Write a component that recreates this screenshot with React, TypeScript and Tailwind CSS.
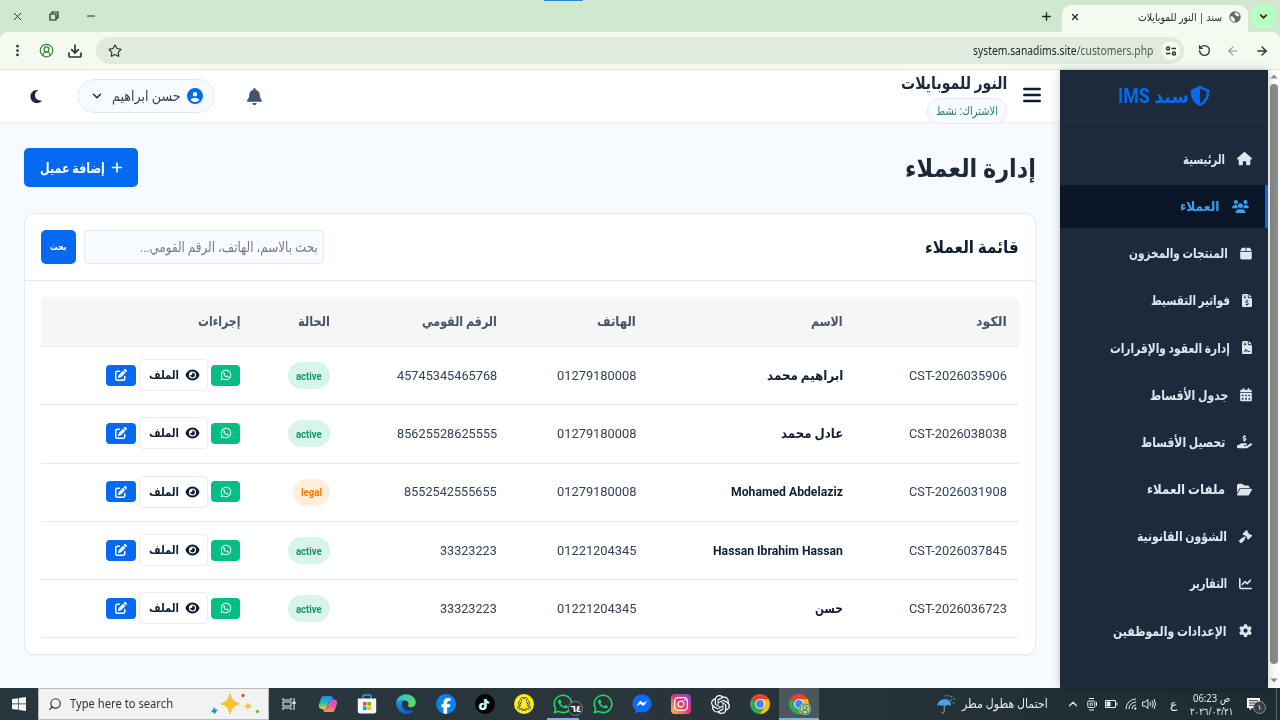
import React, { useLayoutEffect, useRef, useState } from 'react';
import clsx from 'clsx';
import {
  FaBell, FaBox, FaCalendarDays, FaChartLine, FaCircleUser, FaEye, FaFacebookF, FaFileContract,
  FaFileInvoiceDollar, FaFolderOpen, FaGavel, FaGear, FaHandHoldingDollar, FaHouse, FaInstagram,
  FaMoon, FaPenToSquare, FaPlus, FaShieldHalved, FaSnapchat, FaTiktok, FaUsers, FaWhatsapp,
} from 'react-icons/fa6';
import { SiOpenai } from 'react-icons/si';
import { ArrowLeft, ArrowRight, ChevronDown, ChevronUp, CircleUserRound, Download, EllipsisVertical, Minus, Plus, RotateCcw, Search, Star, X } from 'lucide-react';

// Squeezes or stretches one line of text to the width given by its class
function Fit({ children, className }: { children: React.ReactNode; className?: string }) {
  const outer = useRef<HTMLSpanElement>(null);
  const inner = useRef<HTMLSpanElement>(null);
  const [scale, setScale] = useState(1);
  useLayoutEffect(() => {
    if (outer.current && inner.current) setScale(outer.current.clientWidth / inner.current.offsetWidth);
  }, [children]);
  return (
    <span ref={outer} dir="ltr" className={clsx('block shrink-0 text-left leading-none', className)}>
      <span ref={inner} dir="auto" className="inline-block whitespace-nowrap origin-left" style={{ transform: `scaleX(${scale})` }}>
        {children}
      </span>
    </span>
  );
}

const MENU = [
  { icon: FaHouse, iconW: 'w-[15px]', label: 'الرئيسية', w: 'w-[42px]' },
  { icon: FaUsers, iconW: 'w-[17px]', label: 'العملاء', w: 'w-[40px]', active: true },
  { icon: FaBox, iconW: 'w-[12px]', label: 'المنتجات والمخزون', w: 'w-[99px]' },
  { icon: FaFileInvoiceDollar, iconW: 'w-[10px]', label: 'فواتير التقسيط', w: 'w-[79px]' },
  { icon: FaFileContract, iconW: 'w-[10px]', label: 'إدارة العقود والإقرارات', w: 'w-[120px]' },
  { icon: FaCalendarDays, iconW: 'w-[12px]', label: 'جدول الأقساط', w: 'w-[78px]' },
  { icon: FaHandHoldingDollar, iconW: 'w-[15px]', label: 'تحصيل الأقساط', w: 'w-[84px]' },
  { icon: FaFolderOpen, iconW: 'w-[15px]', label: 'ملفات العملاء', w: 'w-[78px]' },
  { icon: FaGavel, iconW: 'w-[13px]', label: 'الشؤون القانونية', w: 'w-[90px]' },
  { icon: FaChartLine, iconW: 'w-[13px]', label: 'التقارير', w: 'w-[37px]' },
  { icon: FaGear, iconW: 'w-[13px]', label: 'الإعدادات والموظفين', w: 'w-[114px]' },
];

const COLUMNS = [
  { label: 'الكود', w: 'w-[31px]' },
  { label: 'الاسم', w: 'w-[32px]' },
  { label: 'الهاتف', w: 'w-[39px]' },
  { label: 'الرقم القومي', w: 'w-[75px]' },
  { label: 'الحالة', w: 'w-[32px]' },
  { label: 'إجراءات', w: 'w-[42px]' },
];

const CUSTOMERS = [
  { code: 'CST-2026035906', name: 'ابراهيم محمد', nameW: 'w-[76px]', phone: '01279180008', nid: '45745345465768', nidW: 'w-[100px]', status: 'active' },
  { code: 'CST-2026038038', name: 'عادل محمد', nameW: 'w-[62px]', phone: '01279180008', nid: '85625528625555', nidW: 'w-[100px]', status: 'active' },
  { code: 'CST-2026031908', name: 'Mohamed Abdelaziz', nameW: 'w-[112px]', phone: '01279180008', nid: '8552542555655', nidW: 'w-[93px]', status: 'legal' },
  { code: 'CST-2026037845', name: 'Hassan Ibrahim Hassan', nameW: 'w-[130px]', phone: '01221204345', nid: '33323223', nidW: 'w-[57px]', status: 'active' },
  { code: 'CST-2026036723', name: 'حسن', nameW: 'w-[28px]', phone: '01221204345', nid: '33323223', nidW: 'w-[57px]', status: 'active' },
];

const GRID = 'grid grid-cols-[164px_207px_139px_167px_90px_211px]';

function Globe() {
  return (
    <svg viewBox="0 0 12 12" className="size-3">
      <circle cx="6" cy="6" r="5.7" fill="#5f6763" />
      <path d="M1.4 5.3c1.6 0 3 .2 3.3 1.4.2 1 1.5.8 1.4 2L5.4 11C3 10.6 1.3 8.600 1.4 5.3zM6 1.5c1.8-.3 3.8 1.2 4.4 3.3l-1.5.7-1.6-.6-.6-1.4-1.6.2z" fill="#f4faf0" />
    </svg>
  );
}

function Browser() {
  return (
    <header className="font-['Noto_Sans','DejaVu_Sans',sans-serif]">
      <div className="relative flex h-8 items-center bg-[#d0e8d0] text-[#1c2b1f]">
        <div className="absolute left-[544px] top-0 flex h-px w-[192px] bg-[#dfe6df]"><div className="w-[39px] bg-[#2a8ad4]" /></div>
        <X className="ml-[11px] size-[13px]" strokeWidth={1.7} />
        <svg viewBox="0 0 10 10" className="ml-[25px] size-[10px]" fill="none" stroke="currentColor" strokeWidth="1.2"><path d="M1 3h6v6H1zM3 3V1h6v6H7" /></svg>
        <Minus className="ml-[26px] size-[12px]" strokeWidth={2.2} />
        <Plus className="ml-auto size-[13px]" strokeWidth={2.5} />
        <div className="ml-[9px] flex h-[27px] w-[186px] items-center self-end rounded-t-[9px] bg-[#f4faf0] pb-1 pl-[8px] pr-[7px]">
          <X className="size-[10px]" strokeWidth={3} />
          <Fit className="ml-auto w-[84px] text-[11px]">سند | النور للموبايلات</Fit>
          <span className="ml-[7px]"><Globe /></span>
        </div>
        <div className="ml-1 mr-[5px] flex size-[23px] items-center justify-center rounded-[8px] bg-[#b8ffc4]">
          <ChevronDown className="size-[11px]" strokeWidth={3.5} />
        </div>
      </div>
      <div className="bg-[#d0e8d0]">
        <div className="flex h-[38px] items-center rounded-t-[8px] border-b border-[#e2e7e0] bg-[#f4faf0] text-[#26382a]">
          <EllipsisVertical className="ml-[10px] size-[15px]" strokeWidth={2.4} />
          <CircleUserRound className="ml-[14px] size-[15px] text-[#2d8a3c]" strokeWidth={2} />
          <Download className="ml-[13px] size-[16px]" strokeWidth={2.5} />
          <div className="ml-[13px] flex h-[27px] w-[1088px] items-center rounded-full bg-[#e0eadf] pl-[12px] pr-[4px]">
            <Star className="size-[14px]" strokeWidth={2} />
            <Fit className="ml-auto w-[180px] text-[12px]"><span className="text-[#1a271d]">system.sanadims.site</span><span className="text-[#506052]">/customers.php</span></Fit>
            <span className="ml-[8px] flex size-[19px] items-center justify-center rounded-full bg-[#f4faf0]">
              <svg viewBox="0 0 12 10" className="h-[10px] w-[12px]" fill="none" stroke="currentColor" strokeWidth="1.4"><circle cx="3" cy="2.5" r="1.5" /><path d="M6.500 2.5H11M1 7.5h4.5" /><circle cx="9" cy="7.5" r="1.5" /></svg>
            </span>
          </div>
          <RotateCcw className="ml-[14px] size-[13px]" strokeWidth={2.4} />
          <ArrowLeft className="ml-[15px] size-[14px] text-[#94a096]" strokeWidth={2} />
          <ArrowRight className="ml-[15px] size-[14px]" strokeWidth={2.4} />
        </div>
      </div>
    </header>
  );
}

function Sidebar() {
  return (
    <aside className="z-10 flex w-[208px] shrink-0 flex-col bg-[#1c2a3c] shadow-[0_0_9px_rgba(0,0,0,0.22)]">
      <div className="flex h-[52px] items-center justify-center gap-px border-b border-[#253447] text-[#0569f2]">
        <FaShieldHalved className="size-[20px]" />
        <Fit className="w-[71px] text-[20px] font-bold">سند IMS</Fit>
      </div>
      <nav className="flex flex-col gap-[4.2px] pt-[15.5px]">
        {MENU.map(({ icon: Icon, iconW, label, w, active }) => (
          <a key={label}
            className={clsx('flex h-[43px] items-center gap-3 px-4 font-bold',
              active ? 'border-r-[3px] border-[#0569f2] bg-[#0a1628] text-[#38a0f0]' : 'text-[#dfe6ee]')}>
            <Icon className={clsx(iconW, 'h-[13.3px] shrink-0')} />
            <Fit className={clsx(w, 'pt-px text-[13.5px]')}>{label}</Fit>
          </a>
        ))}
      </nav>
    </aside>
  );
}

function TopBar() {
  return (
    <div className="flex h-[53px] items-start justify-between border-b border-[#e8eef5] bg-white pl-[30px] pr-[19px]">
      <div className="flex gap-4">
        <svg viewBox="0 0 18 16" className="mt-[17px] h-4 w-[18px]" stroke="#0f1c30" strokeWidth="2.5" strokeLinecap="round"><path d="M1.3 2h15.4M1.3 8h15.4M1.3 14h15.4" /></svg>
        <div className="flex flex-col items-start pt-[5px]">
          <Fit className="h-[23px] w-[106px] text-[17px] font-bold text-[#1b293b]">النور للموبايلات</Fit>
          <div className="flex h-[26px] items-center rounded-[12px] border border-[#e2eaf3] bg-[#f7fafe] px-2">
            <Fit className="w-[62px] text-[12px] text-[#2a8468]">الاشتراك: نشط</Fit>
          </div>
        </div>
      </div>
      <div className="flex h-[52px] items-center">
        <FaBell className="h-[17px] w-[15px] text-[#43536a]" />
        <div className="ml-[36px] mr-[32px] flex h-[34px] w-[137px] items-center rounded-full border border-[#e0e9f3] bg-[#f7fafe] pr-[11px]">
          <FaCircleUser className="size-[16px] text-[#0569f2]" />
          <Fit className="mr-[6px] w-[69px] text-[14px] text-[#334155]">حسن ابراهيم</Fit>
          <ChevronDown className="mr-[8px] size-[14px] text-[#1b293b]" strokeWidth={2.5} />
        </div>
        <FaMoon className="h-[15px] w-[12px] text-[#1b293b]" />
      </div>
    </div>
  );
}

function Customers() {
  return (
    <main className="px-6 pt-[25px]">
      <div className="flex h-[39px] items-center justify-between">
        <Fit className="w-[131px] pt-px text-[25px] font-bold text-[#1b293b]">إدارة العملاء</Fit>
        <button className="flex h-[39px] w-[114px] items-center justify-center gap-[6px] rounded-[5px] bg-[#0569f2] text-white">
          <FaPlus className="h-[13px] w-[12px]" />
          <Fit className="w-[65px] text-[14px] font-bold">إضافة عميل</Fit>
        </button>
      </div>
      <section className="mt-[26px] h-[442px] rounded-[10px] border border-[#e2eaf3] bg-white shadow-[0_1px_2px_rgba(0,0,0,0.04)]">
        <div className="flex h-[67px] items-center justify-between border-b border-[#e2eaf3] px-4">
          <Fit className="w-[94px] pt-px text-[17px] font-bold text-[#111f33]">قائمة العملاء</Fit>
          <div className="flex gap-2">
            <div className="flex h-[34px] w-[240px] items-center rounded-[4px] border border-[#e2eaf3] bg-[#f7fafe] px-[5px]">
              <Fit className="w-[178px] text-[14px] text-[#7b7b7b]">بحث بالاسم، الهاتف، الرقم القومي...</Fit>
            </div>
            <button className="flex h-[34px] w-[35px] items-center justify-center rounded-[5px] bg-[#0569f2] text-white">
              <Fit className="w-[17px] text-[10px] font-bold">بحث</Fit>
            </button>
          </div>
        </div>
        <div className="mx-4 mt-4">
          <div className={clsx(GRID, 'h-[50px] items-center rounded-t-[5px] border-b border-[#e6edf5] bg-[#f6f6f6] text-[#475569]')}>
            {COLUMNS.map(c => (
              <div key={c.label} className="flex px-3"><Fit className={clsx(c.w, 'pt-px text-[13.5px] font-bold')}>{c.label}</Fit></div>
            ))}
          </div>
          {CUSTOMERS.map(c => (
            <div key={c.code} className={clsx(GRID, 'h-[58.3px] items-center border-b border-[#e2eaf3] text-[13.5px] text-[#334155]')}>
              <div className="flex px-3"><Fit className="w-[98px]">{c.code}</Fit></div>
              <div className="flex px-3"><Fit className={clsx(c.nameW, 'font-bold text-[#111f33]')}>{c.name}</Fit></div>
              <div className="flex px-3"><Fit className="w-[79px]">{c.phone}</Fit></div>
              <div className="flex px-3"><Fit className={c.nidW}>{c.nid}</Fit></div>
              <div className="flex px-3">
                <span className={clsx('flex h-[27px] items-center rounded-full px-[8px] text-[11px] font-bold',
                  c.status === 'active' ? 'bg-[#d8f4eb] text-[#159570]' : 'bg-[#ffefd9] text-[#f5780f]')}>
                  <Fit className={clsx('pt-px', c.status === 'active' ? 'w-[26px]' : 'w-[21px]')}>{c.status}</Fit>
                </span>
              </div>
              <div className="flex items-center gap-[3px] px-3 pb-px">
                <button className="flex h-[21px] w-[29px] items-center justify-center rounded-[4px] bg-[#05be86] text-white"><FaWhatsapp className="size-[12px]" /></button>
                <button className="flex h-[32px] w-[69px] items-center justify-center gap-[7px] rounded-[4px] border border-[#e6edf5] bg-white text-[#111f33]">
                  <FaEye className="h-[12px] w-[13px] scale-110" />
                  <Fit className="w-[30px] text-[12px] font-bold">الملف</Fit>
                </button>
                <button className="flex h-[21px] w-[30px] items-center justify-center rounded-[4px] bg-[#0569f2] text-white"><FaPenToSquare className="size-[12px]" /></button>
              </div>
            </div>
          ))}
        </div>
      </section>
    </main>
  );
}

function Chrome() {
  return (
    <svg viewBox="0 0 20 20" className="size-5">
      <path d="M10 10 1.34 5a10 10 0 0 1 17.32 0z" fill="#ea4335" />
      <path d="M10 10 1.34 5A10 10 0 0 0 10 20l4.3-7.5z" fill="#34a853" />
      <path d="M10 5h8.66A10 10 0 0 1 10 20l4.3-7.5z" fill="#fbbc04" />
      <circle cx="10" cy="10" r="4.9" fill="#fff" /><circle cx="10" cy="10" r="3.9" fill="#4285f4" />
    </svg>
  );
}

function Copilot() {
  return (
    <svg viewBox="0 0 20 20" className="size-5">
      <defs>
        <linearGradient id="cpA" x1="0" y1="0" x2="0" y2="1"><stop stopColor="#168bea" /><stop offset=".55" stopColor="#27bfae" /><stop offset="1" stopColor="#f4c92d" /></linearGradient>
        <linearGradient id="cpB" x1="0" y1="0" x2="0" y2="1"><stop stopColor="#a65cf0" /><stop offset=".6" stopColor="#f05a8c" /><stop offset="1" stopColor="#fb9a4b" /></linearGradient>
      </defs>
      <path d="M6 2h6.500c1.3 0 2 .8 2.4 2l.4 1.500h-2c-1.3 0-2 .7-2.4 2L9 13c-.4 1.300-1 2-2.400 2H4C1.500 15 .3 13 1 10.500L3 4.500C3.600 2.800 4.500 2 6 2z" fill="url(#cpA)" />
      <path d="M14 18H7.500c-1.300 0-2-.8-2.400-2L4.700 15h2c1.300 0 2-.7 2.400-2L11 7.500c.4-1.300 1-2 2.400-2H16c2.500 0 3.700 1.700 3 4.200l-2 5.800c-.6 1.700-1.500 2.500-3 2.500z" fill="url(#cpB)" />
    </svg>
  );
}

function Store() {
  return (
    <svg viewBox="0 0 20 20" className="size-5">
      <path d="M6 5V2.500C6 1.500 6.500 1 7.500 1h5c1 0 1.500.5 1.500 1.500V5" fill="none" stroke="#29a8e8" strokeWidth="1.5" />
      <path d="M.8 4.500h18.400V17a2.500 2.500 0 0 1-2.500 2.500H3.300A2.500 2.500 0 0 1 .8 17z" fill="#f5f6f7" />
      <path d="M6 8h3.600v3.600H6z" fill="#f25022" /><path d="M10.400 8H14v3.600h-3.600z" fill="#7fba00" />
      <path d="M6 12.400h3.600V16H6z" fill="#00a4ef" /><path d="M10.400 12.400H14V16h-3.600z" fill="#ffb900" />
    </svg>
  );
}

function Edge() {
  return (
    <svg viewBox="0 0 20 20" className="size-5">
      <defs>
        <linearGradient id="edA" x1="0" y1="0" x2="1" y2=".4"><stop stopColor="#2bb5ee" /><stop offset="1" stopColor="#5ddb63" /></linearGradient>
        <linearGradient id="edB" x1="0" y1="0" x2="0" y2="1"><stop stopColor="#1c9ee6" /><stop offset="1" stopColor="#0f5fc0" /></linearGradient>
      </defs>
      <path d="M.2 9C.7 4 4.800.2 10 .2c5.500 0 9.800 3.800 9.800 8 0 3-2.300 5-5 5-2 0-3.300-.8-2.700-1.700 1.500-2.300-.5-5-3.300-5C5 6.500 1.500 7 .2 9z" fill="url(#edA)" />
      <path d="M.2 9C1.500 6 5 5.200 7.500 6.500 4.500 8 5 17 13 17c2 0 3.600-.6 5.200-1.500A10 10 0 0 1 10 19.900C4.500 19.900 0 15 .2 9z" fill="url(#edB)" />
      <path d="M7.600 9.500C6 13 8.500 17.300 13 17c2 0 3.800-.7 5-1.500-5 1-9.500-1-10.400-6z" fill="#123f91" />
    </svg>
  );
}

function Messenger() {
  return (
    <svg viewBox="0 0 20 20" className="size-5">
      <path d="M10 .5C4.500.5.5 4.400.5 9.600c0 2.700 1.100 5 3 6.600v3.300l3-1.500c1 .3 2.200.5 3.500.5 5.500 0 9.500-3.900 9.500-9S15.500.5 10 .5z" fill="#0a6cff" />
      <path d="m4.300 12.200 2.900-4.500c.5-.7 1.400-.9 2.100-.4l2.100 1.600 3.900-2.300-2.800 4.500c-.5.7-1.400.9-2.100.4L8.300 9.900z" fill="#fff" />
    </svg>
  );
}

function Sparkles() {
  return (
    <svg viewBox="0 0 50 22" className="h-[22px] w-[50px]">
      <path d="M20 1c1.500 6 3 8 9 10-6 1.500-7.500 3.500-9 9.500-1.500-6-3-8-9-9.500 6-2 7.500-4 9-10z" fill="#fbc02d" stroke="#fbc02d" strokeWidth="1.2" strokeLinejoin="round" />
      <path d="M38 8.500c.7 3 1.500 4 4.500 4.800-3 .7-3.800 1.700-4.500 4.700-.7-3-1.500-4-4.500-4.700 3-.8 3.800-1.800 4.500-4.800z" fill="#fbc02d" />
      <path d="m4 14 1.300 2.200L8 17l-2 1.800L5 21l-1.800-1.500L1 18.500l2-1.700z" fill="#1590e0" />
      <circle cx="33" cy="2.5" r="1.7" fill="#e5532d" /><circle cx="47.5" cy="18.5" r="1.7" fill="#76b843" />
    </svg>
  );
}

function Taskbar() {
  const apps = [
    <svg viewBox="0 0 14 12" className="h-3 w-[14px]" fill="none" stroke="#e8ecee" strokeWidth="1.1"><path d="M1 0v2h8V0M1 12v-2h8v2M1 4h8v4H1zM12 0v3.500M12 6v6" /><path d="M11 4h2v1.500h-2z" fill="#e8ecee" /></svg>,
    <Copilot />,
    <Store />,
    <Edge />,
    <span className="flex size-5 items-end justify-center overflow-hidden rounded-full bg-[#0b82f0]"><FaFacebookF className="size-4 text-white" /></span>,
    <span className="flex size-5 items-center justify-center rounded-full bg-black"><FaTiktok className="size-[11px] text-white drop-shadow-[-1px_0_0_#25f4ee]" /></span>,
    <span className="flex size-5 items-center justify-center rounded-full bg-[#fff200]"><FaSnapchat className="size-[14px] text-white [paint-order:stroke] [stroke-width:40px] [stroke:#222]" /></span>,
    <span className="relative">
      <FaWhatsapp className="size-[22px] text-[#25d366]" />
      <span className="absolute -right-[9px] top-[8px] flex size-[15px] items-center justify-center rounded-full border border-[#7b8488] bg-[#2a3135] text-[9px] font-bold text-white"><bdo dir="ltr">٦٤</bdo></span>
    </span>,
    <FaWhatsapp className="size-[22px] text-[#25d366]" />,
    <Messenger />,
    <span className="flex size-5 items-center justify-center rounded-[4px] bg-linear-to-bl from-[#7b35d8] via-[#e8306e] to-[#fdc03c]"><FaInstagram className="size-[16px] text-white" /></span>,
    <SiOpenai className="size-[19px] text-white" />,
    <Chrome />,
    <span className="relative"><Chrome /><span className="absolute -right-[2px] top-[9px] rounded-full bg-[#b9d8a8]"><CircleUserRound className="size-3 text-[#4c7c48]" strokeWidth={2} /></span></span>,
  ];
  return (
    <footer className="flex h-8 bg-linear-to-r from-[#26363f] via-[#29353a] to-[#1d2d33] font-['Noto_Sans','DejaVu_Sans',sans-serif] text-[#e8ecee]">
      <div className="flex w-[38px] items-center justify-center">
        <svg viewBox="0 0 14 14" className="size-[14px]" fill="#f5f5f5"><path d="M0 2l6-.8v5.400H0zM6.700 1.100 14 0v6.600H6.700zM0 7.300h6v5.400L0 12zM6.700 7.300H14V14l-7.300-1.100z" /></svg>
      </div>
      <div className="flex w-[231px] items-center border border-[#b9b9b9] bg-[#f2f2f2] text-[#333]">
        <Search className="ml-[9px] size-[14px] -scale-x-100" strokeWidth={2} />
        <Fit className="ml-[8px] w-[103px] pt-px text-[12.5px]">Type here to search</Fit>
        <span className="ml-auto mr-[8px]"><Sparkles /></span>
      </div>
      {apps.map((app, i) => (
        <div key={i} className={clsx('relative flex w-[39.25px] items-center justify-center', i === 13 && 'border-b-2 border-[#75b5e8] bg-[#4b575d] pt-[2px]')}>
          {app}
          {i === 7 && <span className="absolute bottom-0 h-[2px] w-8 bg-[#75b5e8]" />}
        </div>
      ))}
      <div className="ml-auto flex items-center">
        <svg viewBox="0 0 18 20" className="h-5 w-[18px]"><path d="M8 5C4 5 .5 8 .2 12c1.500-1.200 3-1.200 4 0 1.500-1.300 3.500-1.300 4.500 0 1.500-1.200 3.500-1.200 5 0C14.500 8 12 5 8 5z" fill="#4aa3e8" /><path d="M7.200 11v6.500c0 2-2.700 2-2.700.3" fill="none" stroke="#a8abad" /><path d="m9 1-.7 1.500M12 1l-.7 1.500M15 2l-.7 1.500M17.500 4l-.7 1.500M14.500 5.500 13.800 7M17 8l-.7 1.500" stroke="#4aa3e8" strokeWidth="1.3" /></svg>
        <Fit className="ml-[7px] w-[86px] text-[12.5px]">احتمال هطول مطر</Fit>
        <ChevronUp className="ml-[18px] size-[14px]" strokeWidth={2} />
        <svg viewBox="0 0 10 14" className="ml-[7px] h-[14px] w-[10px]" fill="none" stroke="currentColor"><rect x=".8" y="4" width="7" height="6.5" rx="1" /><circle cx="4.3" cy="7.2" r="1.3" /><path d="M2 1.500h5M2 13h5M9.500 5v4" /></svg>
        <svg viewBox="0 0 13 8" className="ml-[8px] h-2 w-[13px]" fill="none" stroke="currentColor"><path d="M.5.500h10v7H.5zM12 2.500v3" /><path d="M2 2h3v4H2z" fill="currentColor" /></svg>
        <svg viewBox="0 0 12 12" className="ml-[7px] size-[12px]" fill="none" stroke="currentColor"><path d="M1 11A10 10 0 0 1 11 1M4 11a7 7 0 0 1 7-7M7 11a4 4 0 0 1 4-4" /><circle cx="10.3" cy="10.5" r=".8" fill="currentColor" /></svg>
        <svg viewBox="0 0 14 12" className="ml-[5px] h-3 w-[14px]" fill="none" stroke="currentColor"><path d="M.5 4v4H3l3 2.500v-9L3 4zM8 4q1.500 2 0 4M10 2.500q2.500 3.500 0 7M12 1q3 5 0 10" /></svg>
        <span className="ml-[14px] w-[8px] text-[12px]">ع</span>
        <div className="ml-[12px] flex w-[43px] flex-col items-center gap-[3px] text-[11px]">
          <div className="flex gap-[3px] leading-none"><Fit className="w-[24px]">06:23</Fit><Fit className="w-[10px]">ص</Fit></div>
          <Fit className="w-[43px] text-[10px]"><bdo dir="ltr">٢٠٢٦/٠٣/٢١</bdo></Fit>
        </div>
        <div className="relative ml-[14px] mr-[10px] w-[19px]">
          <svg viewBox="0 0 13 13" className="size-[13px]"><path d="M0 0h13v10H5l-2.500 2.500V10H0z" fill="#fff" /><path d="M2 2.700h9M2 5h9M2 7.300h6" stroke="#26343a" /></svg>
          <span className="absolute left-[6px] top-[3px] flex size-[13px] items-center justify-center rounded-full border border-[#8b9498] bg-[#333d42] text-[8px]">١</span>
        </div>
        <span className="mr-[3px] h-8 w-px bg-[#5d696f]" />
      </div>
    </footer>
  );
}

export default function App() {
  return (
    <div className="flex h-[720px] w-[1280px] flex-col overflow-hidden">
      <Browser />
      <div className="flex h-[618px] font-['Roboto','DejaVu_Sans',sans-serif]">
        <div dir="rtl" className="flex min-w-0 flex-1">
          <Sidebar />
          <div className="min-w-0 flex-1 bg-[#f7fafe]">
            <TopBar />
            <Customers />
          </div>
        </div>
        <div className="flex w-3 flex-col items-center bg-[#fcfcfc]">
          <svg viewBox="0 0 8 14" className="h-[14px] w-2" fill="#8b8b8b"><path d="M.5 8.500 4 4.500l3.500 4z" /></svg>
          <div className="h-[580px] w-2 rounded-full bg-[#8b8b8b]" />
          <svg viewBox="0 0 8 14" className="mt-auto h-[14px] w-2" fill="#8b8b8b"><path d="M.5 4.500 4 8.500l3.500-4z" /></svg>
        </div>
      </div>
      <Taskbar />
    </div>
  );
}
